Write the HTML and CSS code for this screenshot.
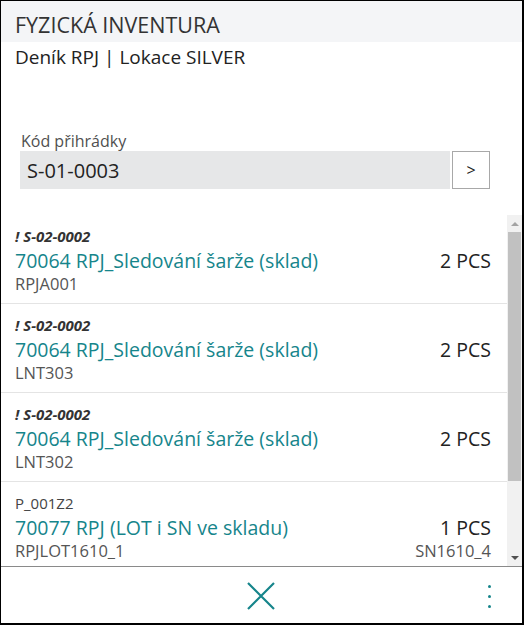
FILE: index.html
```html
<!DOCTYPE html>
<html lang="cs">
<head>
<meta charset="utf-8">
<title>Fyzická inventura</title>
<link rel="stylesheet" href="styles.css">
</head>
<body>
<div class="app">
  <div class="header">FYZICKÁ INVENTURA</div>
  <div class="subtitle">Deník RPJ | Lokace SILVER</div>
  <div class="field">
    <div class="label">Kód přihrádky</div>
    <div class="input-row">
      <div class="input">S-01-0003</div>
      <div class="go">&gt;</div>
    </div>
  </div>
  <div class="list-wrap">
    <div class="list">
      <div class="item">
        <div class="row"><span class="bin">! S-02-0002</span></div>
        <div class="row"><span class="name">70064 RPJ_Sledování šarže (sklad)</span><span class="qty">2 PCS</span></div>
        <div class="row"><span class="lot">RPJA001</span></div>
      </div>
      <div class="item">
        <div class="row"><span class="bin">! S-02-0002</span></div>
        <div class="row"><span class="name">70064 RPJ_Sledování šarže (sklad)</span><span class="qty">2 PCS</span></div>
        <div class="row"><span class="lot">LNT303</span></div>
      </div>
      <div class="item">
        <div class="row"><span class="bin">! S-02-0002</span></div>
        <div class="row"><span class="name">70064 RPJ_Sledování šarže (sklad)</span><span class="qty">2 PCS</span></div>
        <div class="row"><span class="lot">LNT302</span></div>
      </div>
      <div class="item">
        <div class="row"><span class="bin plain">P_001Z2</span></div>
        <div class="row"><span class="name">70077 RPJ (LOT i SN ve skladu)</span><span class="qty">1 PCS</span></div>
        <div class="row"><span class="lot">RPJLOT1610_1</span><span class="lot">SN1610_4</span></div>
      </div>
    </div>
    <div class="scrollbar">
      <div class="sb-btn"><span class="tri up"></span></div>
      <div class="sb-track"><div class="sb-thumb"></div></div>
      <div class="sb-btn"><span class="tri down"></span></div>
    </div>
  </div>
  <div class="footer">
    <div class="close">
      <svg width="28" height="28" viewBox="0 0 28 28"><path d="M1 1 L27 27 M27 1 L1 27" stroke="#16858b" stroke-width="2.2" fill="none"/></svg>
    </div>
    <div class="more">
      <span class="dot"></span><span class="dot"></span><span class="dot"></span>
    </div>
  </div>
</div>
</body>
</html>
```

FILE: styles.css
```css
html, body {
  margin: 0;
  padding: 0;
  background: #fff;
}
body {
  font-family: "Open Sans", "Noto Sans", sans-serif;
  color: #222;
}
.app {
  width: 524px;
  height: 625px;
  box-sizing: border-box;
  border-top: 1px solid #000;
  border-left: 1px solid #000;
  border-right: 2px solid #000;
  border-bottom: 2px solid #000;
  display: flex;
  flex-direction: column;
  overflow: hidden;
}
.header {
  height: 41px;
  box-sizing: border-box;
  padding: 7px 0 0 14px;
  background: #f4f5f7;
  font-size: 21.5px;
  line-height: 34px;
  color: #333;
}
.subtitle {
  padding-left: 14px;
  font-size: 19px;
  line-height: 30px;
  color: #222;
}
.field {
  padding: 58px 0 0 19px;
}
.label {
  font-size: 16px;
  line-height: 22px;
  color: #505050;
  padding-left: 1px;
}
.input-row {
  display: flex;
  gap: 2px;
  margin-top: -1px;
}
.input {
  width: 423px;
  height: 38px;
  background: #e6e7e8;
  padding-left: 7px;
  font-size: 20px;
  line-height: 40px;
  color: #222;
}
.go {
  width: 36px;
  height: 36px;
  border: 1px solid #a8a8a8;
  text-align: center;
  line-height: 36px;
  font-size: 16px;
  color: #222;
}
.list-wrap {
  margin-top: 26px;
  height: 351px;
  display: flex;
  border-bottom: 1px solid #8a8a8a;
}
.list {
  flex: 1;
  overflow: hidden;
}
.item {
  height: 89px;
  box-sizing: border-box;
  padding: 9px 16px 8px 14px;
  border-bottom: 1px solid #e4e4e4;
}
.row {
  display: flex;
  justify-content: space-between;
  align-items: center;
  height: 24px;
}
.bin {
  font-size: 15px;
  font-weight: 700;
  font-style: italic;
  color: #333;
}
.bin.plain {
  font-weight: 400;
  font-style: normal;
  color: #444;
}
.name {
  font-size: 19.5px;
  color: #16858b;
}
.qty {
  font-size: 19.5px;
  color: #222;
}
.lot {
  font-size: 16.5px;
  color: #555;
  line-height: 26px;
}
.scrollbar {
  width: 15px;
  background: #f1f1f1;
  display: flex;
  flex-direction: column;
}
.sb-btn {
  height: 17px;
  display: flex;
  align-items: center;
  justify-content: center;
}
.tri {
  width: 0;
  height: 0;
  border-left: 4px solid transparent;
  border-right: 4px solid transparent;
}
.tri.up {
  border-bottom: 4px solid #a3a3a3;
}
.tri.down {
  border-top: 4px solid #505050;
}
.sb-track {
  flex: 1;
  padding: 0 1px 0 1px;
}
.sb-thumb {
  height: 249px;
  background: #c1c1c1;
}
.footer {
  flex: 1;
  display: flex;
  align-items: center;
  justify-content: center;
  position: relative;
}
.close {
  display: flex;
  margin-left: -2px;
  margin-top: 2px;
}
.more {
  position: absolute;
  right: 31px;
  top: 18px;
  display: flex;
  flex-direction: column;
  gap: 7px;
}
.dot {
  width: 3px;
  height: 3px;
  border-radius: 50%;
  background: #16858b;
}
```
